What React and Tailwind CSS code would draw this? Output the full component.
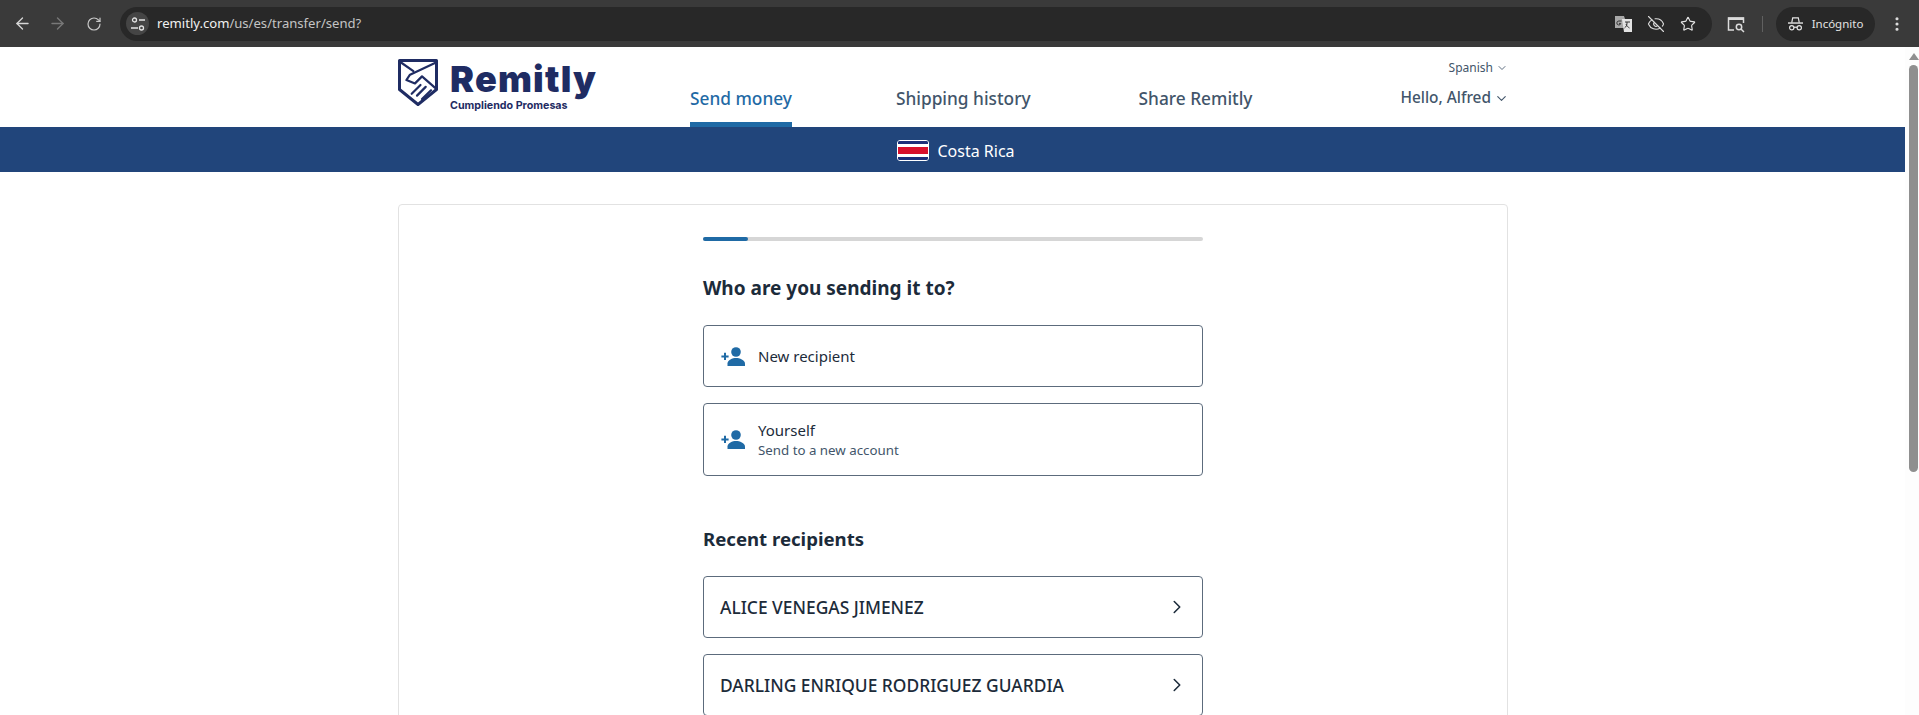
import { ArrowLeft, ArrowRight, RotateCw, Star, EyeOff, ChevronDown, ChevronRight, EllipsisVertical } from 'lucide-react'

const uiFont = "font-['Noto_Sans','Open_Sans',sans-serif]"

function SiteControlsIcon() {
  return (
    <svg className="w-4 h-4" viewBox="0 0 16 16" fill="none" stroke="#e3e3e3" strokeWidth="1.3">
      <circle cx="4.5" cy="4" r="2" />
      <path d="M9 4h6M1 12h7" />
      <circle cx="11.5" cy="12" r="2" />
    </svg>
  )
}

function TranslateIcon() {
  return (
    <svg className="w-[17px] h-[17px]" viewBox="0 0 17 17">
      <path d="M0 1h9l1 3v9H0z" fill="#a8a8a8" />
      <path d="M7 4h10v13H9z" fill="#e3e3e3" />
      <path d="M6.5 6H3.8a2 2 0 1 0 2 2.400H4" fill="none" stroke="#333" strokeWidth="1" />
      <path d="M10 7h5M12 7c.3 3-1 5-2.500 6M11 9c.7 2 2 3 3.500 4" fill="none" stroke="#333" strokeWidth="1" />
    </svg>
  )
}

function TabSearchIcon() {
  return (
    <svg className="w-[18px] h-[18px]" viewBox="0 0 18 18" fill="none" stroke="#dcdcdc" strokeWidth="1.500">
      <path d="M7 15H1.500V3h15v5" />
      <path d="M1 2.500h16V5H1z" fill="#dcdcdc" stroke="none" />
      <circle cx="12" cy="12" r="2.700" />
      <path d="m14 14 3 3" />
    </svg>
  )
}

function IncognitoIcon() {
  return (
    <svg className="w-[15px] h-[15px]" viewBox="0 0 16 16" fill="none" stroke="#e3e3e3" strokeWidth="1.300">
      <path d="M4 7 5 2h6l1 5" />
      <path d="M0 7.500h16" strokeWidth="1.500" />
      <circle cx="4" cy="12.500" r="2.300" />
      <circle cx="12" cy="12.500" r="2.300" />
      <path d="M6.300 12h3.400" />
    </svg>
  )
}

function ChromeBar() {
  return (
    <div className="h-[47px] shrink-0 flex items-center bg-[#3a3a3a] pl-[13px]">
      <div className="w-[93px] flex items-center gap-[16px] shrink-0">
        <ArrowLeft className="w-[19px] h-[19px] text-[#d6d6d6]" strokeWidth={1.7} />
        <ArrowRight className="w-[19px] h-[19px] text-[#787878]" strokeWidth={1.7} />
        <RotateCw className="w-[16px] h-[16px] text-[#c8c8c8] ml-[3px]" strokeWidth={1.8} />
      </div>
      <div className="w-[1592px] ml-[14px] h-[34px] rounded-full bg-[#282828] flex items-center pl-[6px] pr-[16px] shrink-0">
        <div className="w-[23px] h-[23px] rounded-full bg-[#454545] flex items-center justify-center">
          <SiteControlsIcon />
        </div>
        <div className={`ml-[8px] text-[13.100px] text-[#c4c4c4] ${uiFont}`}>
          <span className="text-[#f0f0f0]">remitly.com</span>/us/es/transfer/send?
        </div>
        <div className="ml-auto flex items-center gap-[15px]">
          <TranslateIcon />
          <EyeOff className="w-[18px] h-[18px] text-[#dcdcdc]" strokeWidth={1.5} />
          <Star className="w-[16px] h-[16px] text-[#e3e3e3]" strokeWidth={1.700} />
        </div>
      </div>
      <div className="ml-[15px] shrink-0"><TabSearchIcon /></div>
      <div className="ml-[17px] w-px h-[16px] bg-[#606060] shrink-0" />
      <div className="ml-[13px] w-[99px] h-[34px] rounded-full bg-[#282828] flex items-center justify-center gap-[9px] shrink-0">
        <IncognitoIcon />
        <span className={`text-[11.500px] text-[#e3e3e3] ${uiFont}`}>Incógnito</span>
      </div>
      <EllipsisVertical className="ml-[13px] w-[18px] h-[18px] text-[#dcdcdc] shrink-0" strokeWidth={2.200} />
    </div>
  )
}

function Logo() {
  return (
    <div className="flex items-start gap-[12px] pt-[12px]">
      <svg className="w-[40px] h-[47px] shrink-0" viewBox="0 0 40 47" fill="none" stroke="#1f2c63" strokeWidth="2.200" strokeLinejoin="round" strokeLinecap="round">
        <path d="M1.500 1.500h37v29L20 45.500 1.500 30.500z" strokeWidth="3" />
        <path d="M3 3.500 15.400 12.200" />
        <path d="M38 3.500 12 15.700 8.400 21 17 24.400 24 17.400 38 29.600" />
        <path d="M33 31.300 24 40M27.700 27.900 19 36.600M22.500 26 13.700 34.800" />
      </svg>
      <div className="flex flex-col font-['Inter',sans-serif] text-[#1f2c63]">
        <span className="text-[36px] leading-[40px] font-black tracking-[1.200px]">Remitly</span>
        <span className="text-[10.700px] leading-[13px] font-bold">Cumpliendo Promesas</span>
      </div>
    </div>
  )
}

function Header() {
  return (
    <div className="h-[80px] shrink-0 bg-white flex justify-center">
      <div className={`w-[1109px] flex ${uiFont}`}>
        <div className="w-[292px] shrink-0"><Logo /></div>
        <nav className="flex text-[17.300px] font-medium text-[#42556a]">
          <a className="h-[80px] pt-[39px] border-b-[5px] border-[#1f6aa5] text-[#1f6aa5]">Send money</a>
          <a className="h-[80px] pt-[39px] ml-[104px]">Shipping history</a>
          <a className="h-[80px] pt-[39px] ml-[108px]">Share Remitly</a>
        </nav>
        <div className="ml-auto flex flex-col items-end text-[#42556a]">
          <div className="mt-[13px] -mr-[1px] flex items-center gap-[3px] text-[12px] leading-[16px]">
            Spanish <ChevronDown className="w-[12px] h-[12px]" strokeWidth={1.700} />
          </div>
          <div className="mt-[12px] -mr-[2px] flex items-center gap-[3px] text-[15.400px] font-medium leading-[20px]">
            Hello, Alfred <ChevronDown className="w-[15px] h-[15px]" strokeWidth={1.800} />
          </div>
        </div>
      </div>
    </div>
  )
}

function CountryBand() {
  return (
    <div className={`h-[45px] shrink-0 bg-[#21457b] flex items-center justify-center gap-[8px] pl-[7px] pt-[2px] ${uiFont}`}>
      <div className="w-[32px] h-[21px] rounded-[3px] border border-white overflow-hidden flex flex-col shrink-0">
        <div className="h-[3px] bg-[#1c2f7a]" />
        <div className="h-[3px] bg-white" />
        <div className="flex-1 bg-[#d8102c]" />
        <div className="h-[3px] bg-white" />
        <div className="h-[3px] bg-[#1c2f7a]" />
      </div>
      <span className="text-[16px] text-white">Costa Rica</span>
    </div>
  )
}

function PersonPlusIcon() {
  return (
    <svg className="w-[25px] h-[19px] shrink-0 text-[#1f6aa5]" viewBox="0 0 25 19" fill="currentColor">
      <circle cx="15" cy="5" r="4.800" />
      <path d="M6.500 19v-2.500c0-3.500 5-5.500 8.500-5.500s9 2 9 5.500V19z" />
      <path d="M3 5.800h2v2.600h2.600v2H5V13H3v-2.600H.4v-2H3z" />
    </svg>
  )
}

function OptionCard({ title, subtitle, className }) {
  return (
    <button className={`w-full flex items-center border border-[#5c6b7c] rounded-[4px] pl-[17px] text-left ${className}`}>
      <PersonPlusIcon />
      <div className={`ml-[12px] ${subtitle ? 'pt-[1px]' : ''}`}>
        <div className="text-[15px] leading-[20px] text-[#1c2b3a]">{title}</div>
        {subtitle && <div className="text-[13.300px] leading-[20px] text-[#42556a]">{subtitle}</div>}
      </div>
    </button>
  )
}

function RecipientRow({ name }) {
  return (
    <button className="w-full h-[62px] shrink-0 flex items-center justify-between border border-[#5c6b7c] rounded-[4px] pl-[16px] pr-[17px] text-left">
      <span className="text-[17.400px] font-medium text-[#1c2b3a] pt-[1px]">{name}</span>
      <ChevronRight className="w-[22px] h-[22px] text-[#1c2b3a] -mr-[3px]" strokeWidth={1.700} />
    </button>
  )
}

function SendCard() {
  return (
    <div className={`w-[1110px] h-[560px] shrink-0 mt-[32px] bg-white border border-[#e2e2e2] rounded-[4px] flex flex-col items-center pt-[32px] ${uiFont}`}>
      <div className="w-[500px] flex flex-col">
        <div className="h-[4px] rounded-full bg-[#d6d6d6]">
          <div className="h-full w-[45px] rounded-full bg-[#1f6aa5]" />
        </div>
        <h1 className="mt-[33px] text-[19px] leading-[28px] font-bold text-[#1c2b3a]">Who are you sending it to?</h1>
        <OptionCard className="mt-[23px] h-[62px]" title="New recipient" />
        <OptionCard className="mt-[16px] h-[73px]" title="Yourself" subtitle="Send to a new account" />
        <h2 className="mt-[50px] text-[18.600px] leading-[26px] font-bold text-[#1c2b3a]">Recent recipients</h2>
        <div className="mt-[24px] flex flex-col gap-[16px]">
          <RecipientRow name="ALICE VENEGAS JIMENEZ" />
          <RecipientRow name="DARLING ENRIQUE RODRIGUEZ GUARDIA" />
        </div>
      </div>
    </div>
  )
}

function Scrollbar() {
  return (
    <div className="w-[14px] shrink-0 bg-[#fdfdfd] flex flex-col items-center pl-[3px]">
      <div className="mt-[6px] w-0 h-0 border-x-[5px] border-x-transparent border-b-[7px] border-b-[#8f8f8f]" />
      <div className="mt-[5px] w-[9px] h-[407px] rounded-full bg-[#8f8f8f]" />
    </div>
  )
}

export default function App() {
  return (
    <div className="h-[715px] overflow-hidden flex flex-col bg-white">
      <ChromeBar />
      <div className="flex-1 flex min-h-0">
        <div className="flex-1 flex flex-col min-w-0 overflow-hidden">
          <Header />
          <CountryBand />
          <div className="flex justify-center pl-[1px]">
            <SendCard />
          </div>
        </div>
        <Scrollbar />
      </div>
    </div>
  )
}
